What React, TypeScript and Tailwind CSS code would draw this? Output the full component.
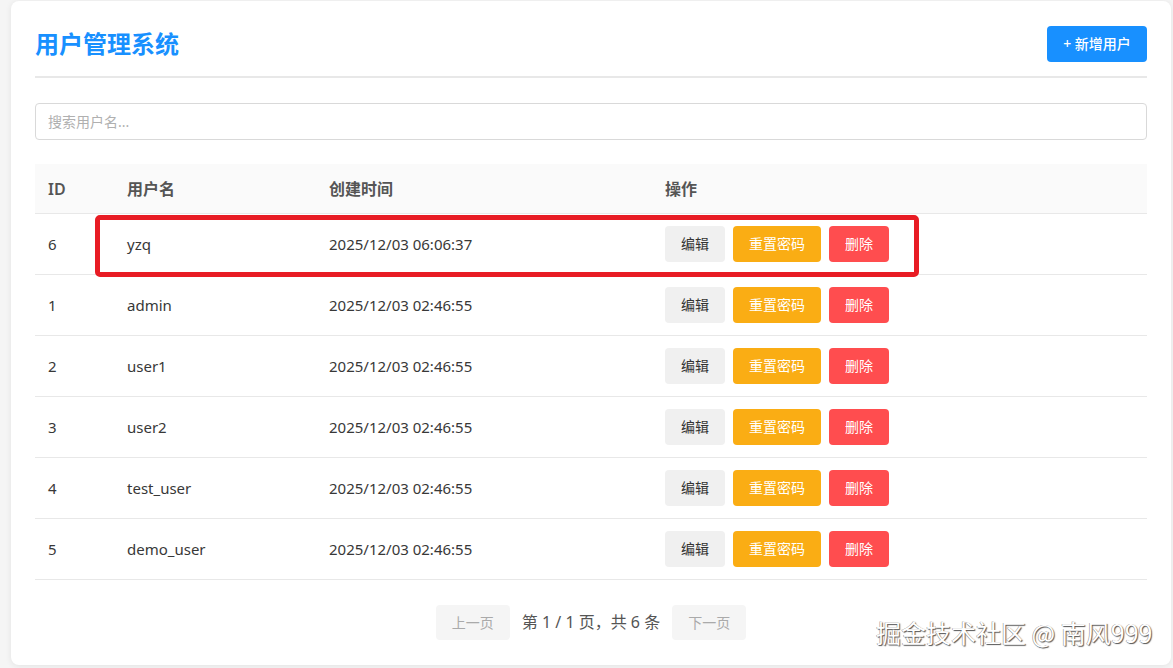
import React from "react";

const users = [
  { id: 6, name: "yzq", created: "2025/12/03 06:06:37" },
  { id: 1, name: "admin", created: "2025/12/03 02:46:55" },
  { id: 2, name: "user1", created: "2025/12/03 02:46:55" },
  { id: 3, name: "user2", created: "2025/12/03 02:46:55" },
  { id: 4, name: "test_user", created: "2025/12/03 02:46:55" },
  { id: 5, name: "demo_user", created: "2025/12/03 02:46:55" },
];

const font = "font-['Segoe_UI','Noto_Sans','Noto_Sans_CJK_SC',sans-serif]";

export default function App() {
  return (
    <div className={`relative min-h-[668px] w-[1173px] bg-[#f5f5f5] pl-[11px] pr-[2px] pt-[1px] ${font}`}>
      <div className="flex h-[664px] flex-col rounded-[8px] bg-white px-6 pt-[25px] shadow-[0_1px_6px_rgba(0,0,0,0.08)]">
        {/* header */}
        <div className="flex items-center justify-between border-b-2 border-[#e8e8e8] pb-[14px]">
          <h1 className="text-[24px] font-bold leading-9 text-[#1890ff]">用户管理系统</h1>
          <button className="-mt-px h-9 w-[100px] rounded-[4px] bg-[#1890ff] text-[14px] font-medium text-white">
            + 新增用户
          </button>
        </div>

        {/* search */}
        <input
          className="mt-[25px] h-[37px] w-full rounded-[4px] border border-[#d9d9d9] px-3 text-[14px] text-[#333] outline-none placeholder:text-[#b0b0b0]"
          placeholder="搜索用户名..."
        />

        {/* table */}
        <table className="mt-6 w-full border-collapse text-left text-[15px] text-[#383838]">
          <thead>
            <tr className="h-[49px] bg-[#fafafa] text-[16px] text-[#555]">
              <th className="w-[80px] px-[13px] pt-[2px] font-semibold">ID</th>
              <th className="w-[202px] px-3 pt-[2px] font-semibold">用户名</th>
              <th className="w-[336px] px-3 pt-[2px] font-semibold">创建时间</th>
              <th className="px-3 pt-[2px] font-semibold">操作</th>
            </tr>
          </thead>
          <tbody>
            {users.map((u) => (
              <tr key={u.id} className="h-[61px] border-t border-[#e8e8e8] last:border-b">
                <td className="px-[13px] pt-[2px]">{u.id}</td>
                <td className="px-3 pt-[2px]">{u.name}</td>
                <td className="px-3 pt-[2px]">{u.created}</td>
                <td className="px-3">
                  <div className="flex gap-2 text-[14px]">
                    <button className="h-9 w-[60px] rounded-[4px] bg-[#f0f0f0] text-[#333]">编辑</button>
                    <button className="h-9 w-[88px] rounded-[4px] bg-[#faad14] text-white">重置密码</button>
                    <button className="h-9 w-[60px] rounded-[4px] bg-[#ff4d4f] text-white">删除</button>
                  </div>
                </td>
              </tr>
            ))}
          </tbody>
        </table>

        {/* pagination */}
        <div className="mt-[25px] flex items-center justify-center gap-3 text-[16px]">
          <button className="h-[35px] w-[74px] rounded-[4px] bg-[#f5f5f5] text-[14px] text-[#aaa]">上一页</button>
          <span className="text-[#555]">第 1 / 1 页，共 6 条</span>
          <button className="h-[35px] w-[74px] rounded-[4px] bg-[#f5f5f5] text-[14px] text-[#aaa]">下一页</button>
        </div>
      </div>

      {/* highlight frame around the newest row */}
      <div className="pointer-events-none absolute left-[95px] top-[215px] h-[62px] w-[824px] rounded-[5px] border-[5px] border-[#e81c24]" />

      {/* watermark */}
      <div className="pointer-events-none absolute left-[876px] top-[616px] font-['Noto_Sans_CJK_SC',sans-serif] text-[25px] leading-8 text-white [text-shadow:1px_1px_1px_#555,-0.5px_-0.5px_0.5px_#888]">
        掘金技术社区 @ 南风999
      </div>
    </div>
  );
}
